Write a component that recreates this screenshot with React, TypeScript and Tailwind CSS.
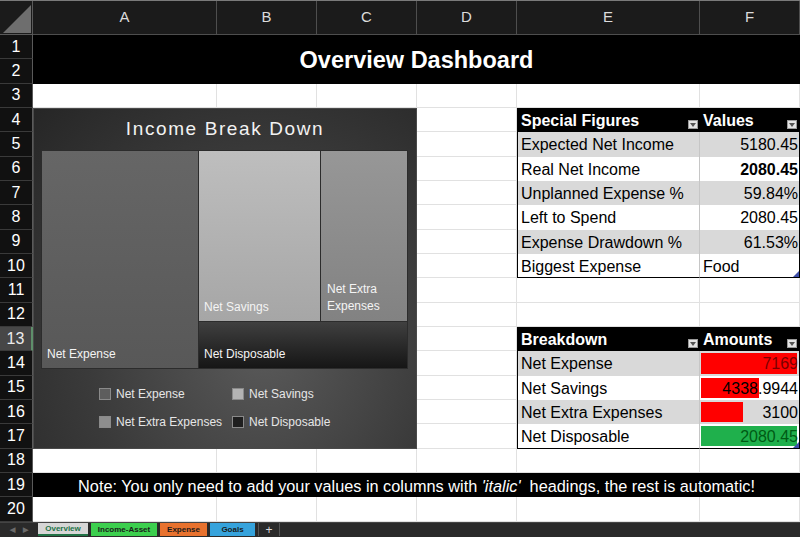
import React from 'react';

const COLS = ['A', 'B', 'C', 'D', 'E', 'F'];

const specialFigures: { label: string; value: string; bold?: boolean; align?: 'left' | 'right' }[] = [
  { label: 'Expected Net Income', value: '5180.45' },
  { label: 'Real Net Income', value: '2080.45', bold: true },
  { label: 'Unplanned Expense %', value: '59.84%' },
  { label: 'Left to Spend', value: '2080.45' },
  { label: 'Expense Drawdown %', value: '61.53%' },
  { label: 'Biggest Expense', value: 'Food', align: 'left' },
];

const breakdown: { label: string; amount: number; text: string; bar: 'red' | 'green'; tone: string }[] = [
  { label: 'Net Expense', amount: 7169, text: '7169', bar: 'red', tone: 'text-[#7a0000]' },
  { label: 'Net Savings', amount: 4338.9944, text: '4338.9944', bar: 'red', tone: 'text-black' },
  { label: 'Net Extra Expenses', amount: 3100, text: '3100', bar: 'red', tone: 'text-black' },
  { label: 'Net Disposable', amount: 2080.45, text: '2080.45', bar: 'green', tone: 'text-[#005a14]' },
];

const maxExpense = Math.max(...breakdown.filter((b) => b.bar === 'red').map((b) => b.amount));

const Blank = () => <div className="bg-white border-r border-b border-[#e1e1e1]" />;

const RowNum: React.FC<{ n: number; selected?: boolean }> = ({ n, selected }) => (
  <div
    className={`flex items-center justify-center text-[16px] border-b border-[#3a3a3a] ${
      selected ? 'bg-[#474747] text-[#ececec] border-r-2 border-r-[#5e8f6a]' : 'bg-[#111111] text-white border-r border-r-[#5a5a5a]'
    }`}
  >
    {n}
  </div>
);

const FilterButton = () => (
  <span className="absolute right-[2px] bottom-[3px] w-[10px] h-[9px] bg-[#e4e4e4] border border-[#9a9a9a] flex items-center justify-center">
    <svg width="6" height="4" viewBox="0 0 6 4">
      <path d="M0 0h6L3 4z" fill="#555" />
    </svg>
  </span>
);

const TableEnd = () => (
  <svg className="absolute right-0 bottom-0" width="6" height="6" viewBox="0 0 6 6">
    <path d="M6 0v6H0z" fill="#3f4fa8" />
  </svg>
);

const HeaderCell: React.FC<{ label: string; first?: boolean }> = ({ label, first }) => (
  <div
    className={`relative bg-black text-white font-bold text-[16px] flex items-center pl-[3px] pt-[2px] ${
      first ? 'border-l border-black' : 'border-r border-black'
    }`}
  >
    {label}
    <FilterButton />
  </div>
);

const Chart = () => {
  const legend = [
    { label: 'Net Expense', swatch: 'bg-[#5d5d5d]' },
    { label: 'Net Savings', swatch: 'bg-[#b3b3b3]' },
    { label: 'Net Extra Expenses', swatch: 'bg-[#8d8d8d]' },
    { label: 'Net Disposable', swatch: 'bg-[#1f1f1f]' },
  ];
  return (
    <div className="col-span-3 row-span-14 border border-[#4a4a4a] bg-[radial-gradient(ellipse_at_60%_70%,#5a5a5a_0%,#3a3a3a_55%,#262626_100%)] flex flex-col text-[#f4f4f4]">
      <div className="h-[41px] flex items-center justify-center text-[19px] tracking-[1.6px] text-[#f2f2f2]">
        Income Break Down
      </div>
      {/* treemap */}
      <div className="ml-[7px] mr-[8px] h-[219px] flex gap-px bg-[#2c2c2c] p-px text-[12px] leading-[16px]">
        <div className="w-[156px] bg-gradient-to-b from-[#666666] to-[#585858] flex items-end pl-[5px] pb-[6px]">
          Net Expense
        </div>
        <div className="flex-1 flex flex-col gap-px">
          <div className="h-[170px] flex gap-px">
            <div className="w-[121px] bg-gradient-to-b from-[#bebebe] to-[#a6a6a6] flex items-end pl-[5px] pb-[6px]">
              Net Savings
            </div>
            <div className="flex-1 bg-gradient-to-b from-[#979797] to-[#828282] flex items-end pl-[6px] pb-[6px] leading-[17px]">
              Net Extra
              <br />
              Expenses
            </div>
          </div>
          <div className="flex-1 bg-gradient-to-b from-[#404040] to-[#161616] flex items-end pl-[5px] pb-[6px]">
            Net Disposable
          </div>
        </div>
      </div>
      {/* legend */}
      <div className="mt-[17px] pl-[65px] grid grid-cols-[133px_auto] gap-y-[12px] text-[12px] leading-[16px] text-[#e6e6e6]">
        {legend.map((item) => (
          <div key={item.label} className="flex items-center gap-[5px]">
            <span className={`w-[12px] h-[12px] border border-[#8a8a8a] ${item.swatch}`} />
            {item.label}
          </div>
        ))}
      </div>
    </div>
  );
};

export default function App() {
  const cells: React.ReactNode[] = [];

  // column headers
  cells.push(
    <div key="corner" className="bg-[#1b1b1b] border-r border-b border-[#5a5a5a] relative">
      <svg className="absolute inset-0" width="33" height="34" viewBox="0 0 33 34">
        <path d="M3 32L31 4V32z" fill="#6e6e6e" />
      </svg>
    </div>
  );
  COLS.forEach((c) =>
    cells.push(
      <div
        key={`h-${c}`}
        className="bg-[#1b1b1b] text-[#dcdcdc] text-[15px] flex items-center justify-center border-r border-b border-[#4e4e4e]"
      >
        {c}
      </div>
    )
  );

  for (let r = 1; r <= 20; r++) {
    cells.push(<RowNum key={`r-${r}`} n={r} selected={r === 13} />);

    if (r === 1) {
      cells.push(
        <div key="title" className="col-span-6 row-span-2 bg-black text-white font-bold text-[23.5px] flex items-center justify-center pt-[2px]">
          Overview Dashboard
        </div>
      );
    } else if (r === 2) {
      // covered by the merged title
    } else if (r === 19) {
      cells.push(
        <div key="note" className="col-span-6 bg-black text-white text-[16.3px] flex items-center justify-center whitespace-nowrap pt-[2px]">
          Note: You only need to add your values in columns with&nbsp;<span className="italic">'italic'</span>&nbsp; headings, the rest is automatic!
        </div>
      );
    } else if (r === 3 || r === 18 || r === 20) {
      COLS.forEach((c) => cells.push(<Blank key={`${c}${r}`} />));
    } else {
      if (r === 4) cells.push(<Chart key="chart" />);
      cells.push(<Blank key={`D${r}`} />);

      if (r === 4) {
        cells.push(<HeaderCell key="E4" label="Special Figures" first />);
        cells.push(<HeaderCell key="F4" label="Values" />);
      } else if (r >= 5 && r <= 10) {
        const row = specialFigures[r - 5];
        const shade = r % 2 === 1 ? 'bg-[#d9d9d9]' : 'bg-white';
        const last = r === 10 ? 'border-b border-b-black' : '';
        cells.push(
          <div key={`E${r}`} className={`${shade} ${last} border-l border-l-black border-r border-r-[#c6c6c6] flex items-center pl-[3px] pt-[2px] text-[16px] text-black`}>
            {row.label}
          </div>
        );
        cells.push(
          <div
            key={`F${r}`}
            className={`relative ${shade} ${last} border-r border-r-black flex items-center pt-[2px] text-[16px] text-black ${
              row.align === 'left' ? 'pl-[3px]' : 'justify-end pr-[1px]'
            } ${row.bold ? 'font-bold' : ''}`}
          >
            {row.value}
            {r === 10 && <TableEnd />}
          </div>
        );
      } else if (r === 11 || r === 12) {
        cells.push(<Blank key={`E${r}`} />);
        cells.push(<Blank key={`F${r}`} />);
      } else if (r === 13) {
        cells.push(<HeaderCell key="E13" label="Breakdown" first />);
        cells.push(<HeaderCell key="F13" label="Amounts" />);
      } else {
        const row = breakdown[r - 14];
        const shade = r % 2 === 0 ? 'bg-[#d9d9d9]' : 'bg-white';
        const last = r === 17 ? 'border-b border-b-black' : '';
        const width = row.bar === 'green' ? 100 : (row.amount / maxExpense) * 100;
        cells.push(
          <div key={`E${r}`} className={`${shade} ${last} border-l border-l-black border-r border-r-[#c6c6c6] flex items-center pl-[3px] pt-[2px] text-[16px] text-black`}>
            {row.label}
          </div>
        );
        cells.push(
          <div key={`F${r}`} className={`relative ${shade} ${last} border-r border-r-black text-[16px]`}>
            <div className="absolute inset-y-[2px] left-px right-[2px]">
              <div
                className={`h-full ${row.bar === 'green' ? 'bg-[#1fb04c]' : 'bg-[#ff0000]'}`}
                style={{ width: `${width}%` }}
              />
            </div>
            <div className={`relative h-full flex items-center justify-end pr-[1px] pt-[2px] ${row.tone}`}>{row.text}</div>
            {r === 17 && <TableEnd />}
          </div>
        );
      }
    }
  }

  return (
    <div className="w-[800px] h-[537px] flex flex-col bg-[#1b1b1b] overflow-hidden font-['Liberation_Sans',Arial,sans-serif]">
      <div className="grid grid-cols-[33px_184px_100px_100px_100px_183px_100px] grid-rows-[34px_repeat(20,24.33px)] border-t border-[#7a7a7a]">
        {cells}
      </div>
      {/* sheet tabs */}
      <div className="flex-1 bg-[#2a2a2a] border-t border-[#444] flex items-center text-[8px] font-bold">
        <div className="w-[38px] flex items-center justify-center gap-[8px] text-[#6a6a6a] text-[7px]">
          <span>◀</span>
          <span>▶</span>
        </div>
        <div className="w-[50px] h-[13px] bg-[#d6d6d6] text-[#217346] flex items-center justify-center border-b-2 border-[#217346]">
          Overview
        </div>
        <div className="ml-[3px] w-[66px] h-[13px] bg-[#3ccf4e] text-[#1a1a1a] flex items-center justify-center">
          Income-Asset
        </div>
        <div className="ml-[3px] w-[47px] h-[13px] bg-[#e8722e] text-[#1a1a1a] flex items-center justify-center">
          Expense
        </div>
        <div className="ml-[3px] w-[45px] h-[13px] bg-[#36a3dc] text-[#1a1a1a] flex items-center justify-center">
          Goals
        </div>
        <div className="ml-[3px] w-[22px] h-[13px] text-[#dddddd] text-[12px] font-normal flex items-center justify-center border-l border-r border-[#555]">
          +
        </div>
      </div>
    </div>
  );
}
